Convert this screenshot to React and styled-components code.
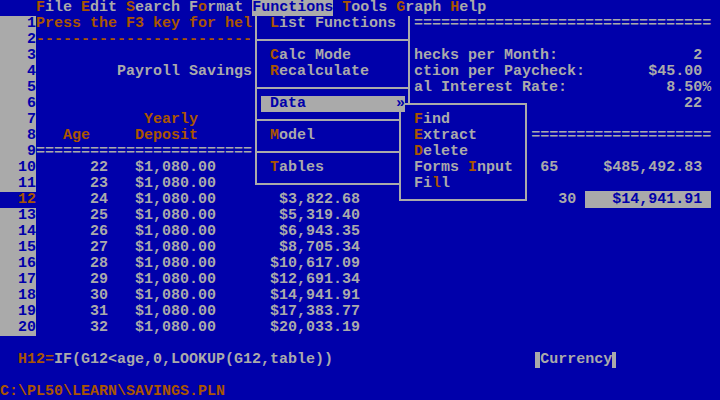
import React from "react";
import styled, { createGlobalStyle } from "styled-components";

const BLUE = "#0000aa";
const GRAY = "#aaaaaa";
const ORANGE = "#aa5500";

const GlobalStyle = createGlobalStyle`
  html, body { margin: 0; padding: 0; background: ${BLUE}; }
  body { width: 720px; height: 400px; overflow: hidden; }
`;

const Screen = styled.div`
  position: relative;
  width: 720px;
  height: 400px;
  background: ${BLUE};
  color: ${GRAY};
  font-family: "Liberation Mono", "DejaVu Sans Mono", monospace;
  font-weight: bold;
  font-size: 15px;
  line-height: 16px;
  display: flex;
  flex-direction: column;
`;

const Line = styled.div`
  display: flex;
  height: 16px;
  flex: none;
  white-space: pre;
`;

const Cells = styled.div`
  flex: 1;
  white-space: pre;
`;

const MenuBar = styled(Line)`
  padding-left: 36px;
  gap: 9px;
`;

const BarItem = styled.span`
  color: ${(p) => (p.$active ? BLUE : GRAY)};
  background: ${(p) => (p.$active ? GRAY : "transparent")};
`;

const Hot = styled.span`
  color: ${ORANGE};
`;

const Gutter = styled.div`
  width: 36px;
  flex: none;
  text-align: right;
  background: ${(p) => (p.$current ? "transparent" : GRAY)};
  color: ${(p) => (p.$current ? ORANGE : BLUE)};
`;

const Text = styled.span`
  color: ${(p) => (p.$tone === "hot" ? ORANGE : p.$tone === "inv" ? BLUE : GRAY)};
  background: ${(p) => (p.$tone === "inv" ? GRAY : "transparent")};
`;

const Field = styled.span`
  display: inline-block;
  vertical-align: top;
  width: 81px;
  box-sizing: border-box;
  margin-left: 4px;
  border-left: 5px solid ${GRAY};
  border-right: 4px solid ${GRAY};
  height: 16px;
`;

// drop-down menus lie over the sheet
const Menu = styled.div`
  position: absolute;
  left: 255px;
  top: 16px;
  width: 155px;
  height: 169px;
  box-sizing: border-box;
  background: ${BLUE};
  border: 2px solid ${GRAY};
  border-top: none;
  display: flex;
  flex-direction: column;
`;

const SubMenu = styled.div`
  position: absolute;
  z-index: 1;
  left: 399px;
  top: 103px;
  width: 128px;
  height: 98px;
  box-sizing: border-box;
  padding-top: 7px;
  background: ${BLUE};
  border: 2px solid ${GRAY};
  display: flex;
  flex-direction: column;
`;

const Item = styled.div`
  height: 16px;
  flex: none;
  padding-left: 13px;
  white-space: pre;
`;

const ActiveItem = styled.div`
  position: relative;
  z-index: 2;
  height: 16px;
  flex: none;
  margin: 0 3px 0 4px;
  padding-left: 9px;
  background: ${GRAY};
  color: ${BLUE};
  display: flex;
  justify-content: space-between;
`;

const Separator = styled.div`
  height: 16px;
  flex: none;
  position: relative;
  &::after {
    content: "";
    position: absolute;
    left: 0;
    right: 0;
    top: 7px;
    height: 2px;
    background: ${GRAY};
  }
`;

function Label({ text, hot }) {
  if (hot == null || hot < 0) return text;
  return (
    <>
      {text.slice(0, hot)}
      <Hot>{text[hot]}</Hot>
      {text.slice(hot + 1)}
    </>
  );
}

// lay text pieces on the 9px character grid of a line
function Segs({ items, start = 0, children }) {
  let cur = start;
  const out = [];
  items.forEach(([col, text, tone], i) => {
    if (col > cur) out.push(" ".repeat(col - cur));
    out.push(
      <Text key={i} $tone={tone}>
        {text}
      </Text>
    );
    cur = col + text.length;
  });
  return (
    <Cells>
      {out}
      {children}
    </Cells>
  );
}

const r = (end, text, tone) => [end - text.length + 1, text, tone];

const menuBar = [
  ["File", 0],
  ["Edit", 0],
  ["Search", 0],
  ["Format", 1],
  ["Functions", -1, true],
  ["Tools", 0],
  ["Graph", 0],
  ["Help", 0],
];

const balances = {
  12: "$3,822.68",
  13: "$5,319.40",
  14: "$6,943.35",
  15: "$8,705.34",
  16: "$10,617.09",
  17: "$12,691.34",
  18: "$14,941.91",
  19: "$17,383.77",
  20: "$20,033.19",
};

function sheetRow(n) {
  switch (n) {
    case 1:
      return [[4, "Press the F3 key for hel", "hot"], [46, "=".repeat(33)]];
    case 2:
      return [[4, "-".repeat(24), "hot"]];
    case 3:
      return [[46, "hecks per Month:"], r(77, "2")];
    case 4:
      return [[13, "Payroll Savings"], [46, "ction per Paycheck:"], r(77, "$45.00")];
    case 5:
      return [[46, "al Interest Rate:"], [74, "8.50%"]];
    case 6:
      return [r(77, "22")];
    case 7:
      return [[16, "Yearly", "hot"]];
    case 8:
      return [[7, "Age", "hot"], [15, "Deposit", "hot"], [59, "=".repeat(20)]];
    case 9:
      return [[4, "=".repeat(24)]];
    default: {
      const row = [r(11, String(n + 12)), [15, "$1,080.00"]];
      if (balances[n]) row.push(r(39, balances[n]));
      if (n === 10) row.push(r(61, "65"), r(77, "$485,492.83"));
      if (n === 12) row.push(r(63, "30"), [65, "   $14,941.91 ", "inv"]);
      return row;
    }
  }
}

const rows = Array.from({ length: 20 }, (_, i) => i + 1);

export default function App() {
  return (
    <Screen>
      <GlobalStyle />
      <MenuBar>
        {menuBar.map(([text, hot, active]) => (
          <BarItem key={text} $active={active}>
            <Label text={text} hot={hot} />
          </BarItem>
        ))}
      </MenuBar>

      {rows.map((n) => (
        <Line key={n}>
          <Gutter $current={n === 12}>{n}</Gutter>
          <Segs items={sheetRow(n)} start={4} />
        </Line>
      ))}

      <Line />
      <Line>
        <Segs
          items={[
            [2, "H12=", "hot"],
            [6, "IF(G12<age,0,LOOKUP(G12,table))"],
            [37, " ".repeat(22)],
          ]}
        >
          <Field>Currency</Field>
        </Segs>
      </Line>
      <Line />
      <Line>
        <Text $tone="hot">C:\PL50\LEARN\SAVINGS.PLN</Text>
      </Line>

      <Menu>
        <Item>
          <Label text="List Functions" hot={0} />
        </Item>
        <Separator />
        <Item>
          <Label text="Calc Mode" hot={0} />
        </Item>
        <Item>
          <Label text="Recalculate" hot={0} />
        </Item>
        <Separator />
        <ActiveItem>
          <span>Data</span>
          <span>»</span>
        </ActiveItem>
        <Separator />
        <Item>
          <Label text="Model" hot={0} />
        </Item>
        <Separator />
        <Item>
          <Label text="Tables" hot={0} />
        </Item>
      </Menu>

      <SubMenu>
        <Item>
          <Label text="Find" hot={0} />
        </Item>
        <Item>
          <Label text="Extract" hot={0} />
        </Item>
        <Item>
          <Label text="Delete" hot={0} />
        </Item>
        <Item>
          <Label text="Forms Input" hot={6} />
        </Item>
        <Item>
          <Label text="Fill" hot={2} />
        </Item>
      </SubMenu>
    </Screen>
  );
}
